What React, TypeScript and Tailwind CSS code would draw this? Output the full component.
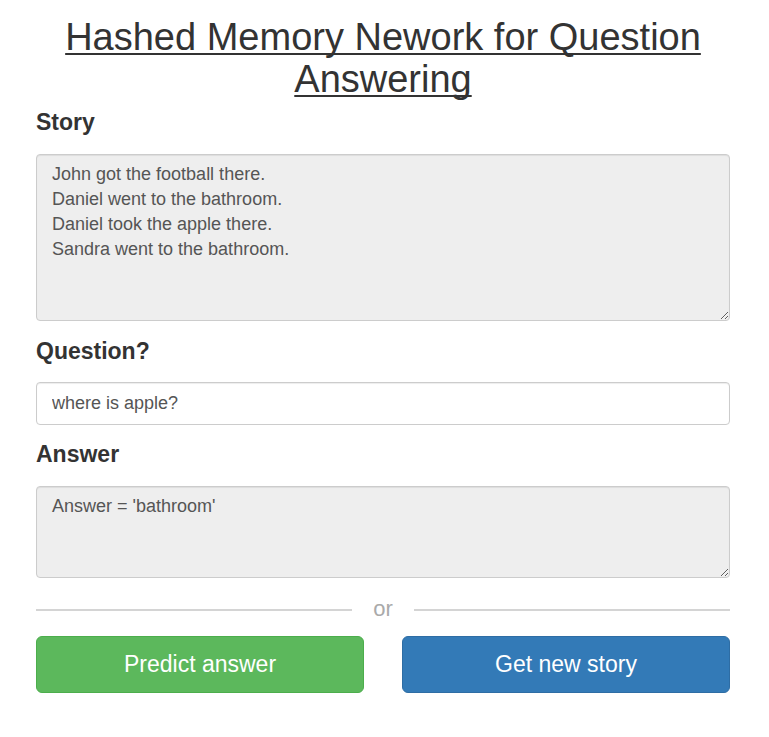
import React from "react";

export default function App() {
  const story =
    "John got the football there.\nDaniel went to the bathroom.\nDaniel took the apple there.\nSandra went to the bathroom.";
  return (
    <div className="min-h-[737px] bg-white font-['Liberation_Sans',Arial,sans-serif] text-[#333]">
      <div className="ml-[36px] w-[694px] flex flex-col">
        <h1 className="mt-[17px] text-center text-[38px] leading-[41.8px] font-normal underline decoration-2 underline-offset-[3px] [text-decoration-skip-ink:none] text-[#333]">
          Hashed Memory Nework for Question Answering
        </h1>

        <label className="mt-[9px] text-[23px] leading-[25px] font-bold text-[#333]">Story</label>
        <textarea
          readOnly
          value={story}
          className="mt-[19px] h-[167px] w-full resize-y rounded-[4px] border border-[#ccc] bg-[#eee] px-[15px] pt-[7px] pb-[5px] text-[18px] leading-[25px] text-[#555] shadow-[inset_0_1px_1px_rgba(0,0,0,0.075)] outline-none"
        />

        <label className="mt-[18px] text-[23px] leading-[25px] font-bold text-[#333]">Question?</label>
        <input
          readOnly
          value="where is apple?"
          className="mt-[18px] h-[43px] w-full rounded-[4px] border border-[#ccc] bg-white px-[15px] py-[8px] text-[18px] leading-[25px] text-[#555] shadow-[inset_0_1px_1px_rgba(0,0,0,0.075)] outline-none"
        />

        <label className="mt-[17px] text-[23px] leading-[25px] font-bold text-[#333]">Answer</label>
        <textarea
          readOnly
          value="Answer = 'bathroom'"
          className="mt-[19px] h-[92px] w-full resize-y rounded-[4px] border border-[#ccc] bg-[#eee] px-[15px] pt-[7px] pb-[5px] text-[18px] leading-[25px] text-[#555] shadow-[inset_0_1px_1px_rgba(0,0,0,0.075)] outline-none"
        />

        <div className="mt-[17px] flex h-[30px] items-center">
          <div className="h-[2px] flex-1 bg-[#d4d4d4]" />
          <span className="w-[62px] text-center text-[22px] leading-[26px] text-[#aaa] -mt-[2px]">or</span>
          <div className="h-[2px] flex-1 bg-[#d4d4d4]" />
        </div>

        <div className="mt-[11px] grid grid-cols-2 gap-[38px]">
          <button className="h-[57px] rounded-[6px] border border-[#4cae4c] bg-[#5cb85c] text-[23px] text-white">
            Predict answer
          </button>
          <button className="h-[57px] rounded-[6px] border border-[#2e6da4] bg-[#337ab7] text-[23px] text-white">
            Get new story
          </button>
        </div>
      </div>
    </div>
  );
}
